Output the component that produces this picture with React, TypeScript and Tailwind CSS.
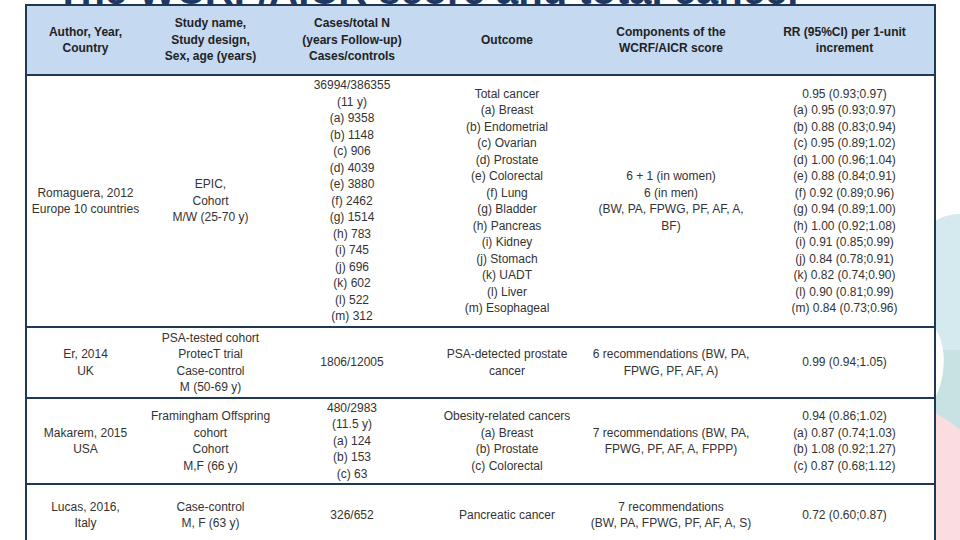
import React from "react";

type Row = {
  h: string;
  cells: string[][];
};

const headers: string[][] = [
  ["Author, Year,", "Country"],
  ["Study name,", "Study design,", "Sex, age (years)"],
  ["Cases/total N", "(years Follow-up)", "Cases/controls"],
  ["Outcome"],
  ["Components of the", "WCRF/AICR score"],
  ["RR (95%CI) per 1-unit", "increment"],
];

const rows: Row[] = [
  {
    h: "h-[252px]",
    cells: [
      ["Romaguera, 2012", "Europe 10 countries"],
      ["EPIC,", "Cohort", "M/W (25-70 y)"],
      [
        "36994/386355",
        "(11 y)",
        "(a) 9358",
        "(b) 1148",
        "(c) 906",
        "(d) 4039",
        "(e) 3880",
        "(f) 2462",
        "(g) 1514",
        "(h) 783",
        "(i) 745",
        "(j) 696",
        "(k) 602",
        "(l) 522",
        "(m) 312",
      ],
      [
        "Total cancer",
        "(a) Breast",
        "(b) Endometrial",
        "(c) Ovarian",
        "(d) Prostate",
        "(e) Colorectal",
        "(f) Lung",
        "(g) Bladder",
        "(h) Pancreas",
        "(i) Kidney",
        "(j) Stomach",
        "(k) UADT",
        "(l) Liver",
        "(m) Esophageal",
      ],
      ["6 + 1 (in women)", "6 (in men)", "(BW, PA, FPWG, PF, AF, A,", "BF)"],
      [
        "0.95 (0.93;0.97)",
        "(a) 0.95 (0.93;0.97)",
        "(b) 0.88 (0.83;0.94)",
        "(c) 0.95 (0.89;1.02)",
        "(d) 1.00 (0.96;1.04)",
        "(e) 0.88 (0.84;0.91)",
        "(f) 0.92 (0.89;0.96)",
        "(g) 0.94 (0.89;1.00)",
        "(h) 1.00 (0.92;1.08)",
        "(i) 0.91 (0.85;0.99)",
        "(j) 0.84 (0.78;0.91)",
        "(k) 0.82 (0.74;0.90)",
        "(l) 0.90 (0.81;0.99)",
        "(m) 0.84 (0.73;0.96)",
      ],
    ],
  },
  {
    h: "h-[71px]",
    cells: [
      ["Er, 2014", "UK"],
      ["PSA-tested cohort", "ProtecT trial", "Case-control", "M (50-69 y)"],
      ["1806/12005"],
      ["PSA-detected prostate", "cancer"],
      ["6 recommendations (BW, PA,", "FPWG, PF, AF, A)"],
      ["0.99 (0.94;1.05)"],
    ],
  },
  {
    h: "h-[86px]",
    cells: [
      ["Makarem, 2015", "USA"],
      ["Framingham Offspring", "cohort", "Cohort", "M,F (66 y)"],
      ["480/2983", "(11.5 y)", "(a) 124", "(b) 153", "(c) 63"],
      ["Obesity-related cancers", "(a) Breast", "(b) Prostate", "(c) Colorectal"],
      ["7 recommendations (BW, PA,", "FPWG, PF, AF, A, FPPP)"],
      [
        "0.94 (0.86;1.02)",
        "(a) 0.87 (0.74;1.03)",
        "(b) 1.08 (0.92;1.27)",
        "(c) 0.87 (0.68;1.12)",
      ],
    ],
  },
  {
    h: "h-[62px]",
    cells: [
      ["Lucas, 2016,", "Italy"],
      ["Case-control", "M, F (63 y)"],
      ["326/652"],
      ["Pancreatic cancer"],
      ["7 recommendations", "(BW, PA, FPWG, PF, AF, A, S)"],
      ["0.72 (0.60;0.87)"],
    ],
  },
];

const colWidths = ["w-[118px]", "w-[133px]", "w-[150px]", "w-[160px]", "w-[168px]", "w-[180px]"];

function Lines({ lines }: { lines: string[] }) {
  return (
    <>
      {lines.map((l, i) => (
        <div key={i}>{l}</div>
      ))}
    </>
  );
}

// soft teal / pink blobs at the right slide edge
function SideDecoration() {
  return (
    <svg className="absolute left-[934px] top-[200px]" width="26" height="340" viewBox="0 0 26 340">
      <path d="M0 22 C8 16 18 14 26 14 L26 340 L0 340 Z" fill="#d4eaee" />
      <path d="M0 150 L26 150 L26 240 L0 240 Z" fill="#c6e2e3" />
      <path d="M0 128 C12 140 14 175 0 200 Z" fill="#ffffff" />
      <path d="M0 212 C10 218 20 224 26 230 L26 340 L0 340 Z" fill="#fbdce0" />
    </svg>
  );
}

export default function App() {
  return (
    <div className="relative w-[960px] h-[540px] overflow-hidden bg-white font-['Liberation_Sans',Arial,sans-serif]">
      {/* slide title, mostly hidden behind the table */}
      <h1 className="absolute left-[56px] top-[-30px] m-0 text-[40px] leading-[40px] font-bold text-[#1f3864] whitespace-nowrap">
        The WCRF/AICR score and total cancer
      </h1>

      <SideDecoration />

      <div className="relative pl-[25px] pt-[4px]">
        <table className="table-fixed border-collapse border-2 border-[#213854] bg-white text-[12px] leading-[16.5px] text-center">
          <colgroup>
            {colWidths.map((w, i) => (
              <col key={i} className={w} />
            ))}
          </colgroup>
          <thead>
            <tr className="h-[70px] bg-[#c5d9f1] border-b-2 border-[#213854]">
              {headers.map((h, i) => (
                <th key={i} className="p-0 align-middle font-bold text-[#222]">
                  <Lines lines={h} />
                </th>
              ))}
            </tr>
          </thead>
          <tbody>
            {rows.map((r, i) => (
              <tr key={i} className={`${r.h} border-b-2 border-[#213854]`}>
                {r.cells.map((c, j) => (
                  <td key={j} className="p-0 align-middle text-[#333]">
                    <Lines lines={c} />
                  </td>
                ))}
              </tr>
            ))}
          </tbody>
        </table>
      </div>
    </div>
  );
}
